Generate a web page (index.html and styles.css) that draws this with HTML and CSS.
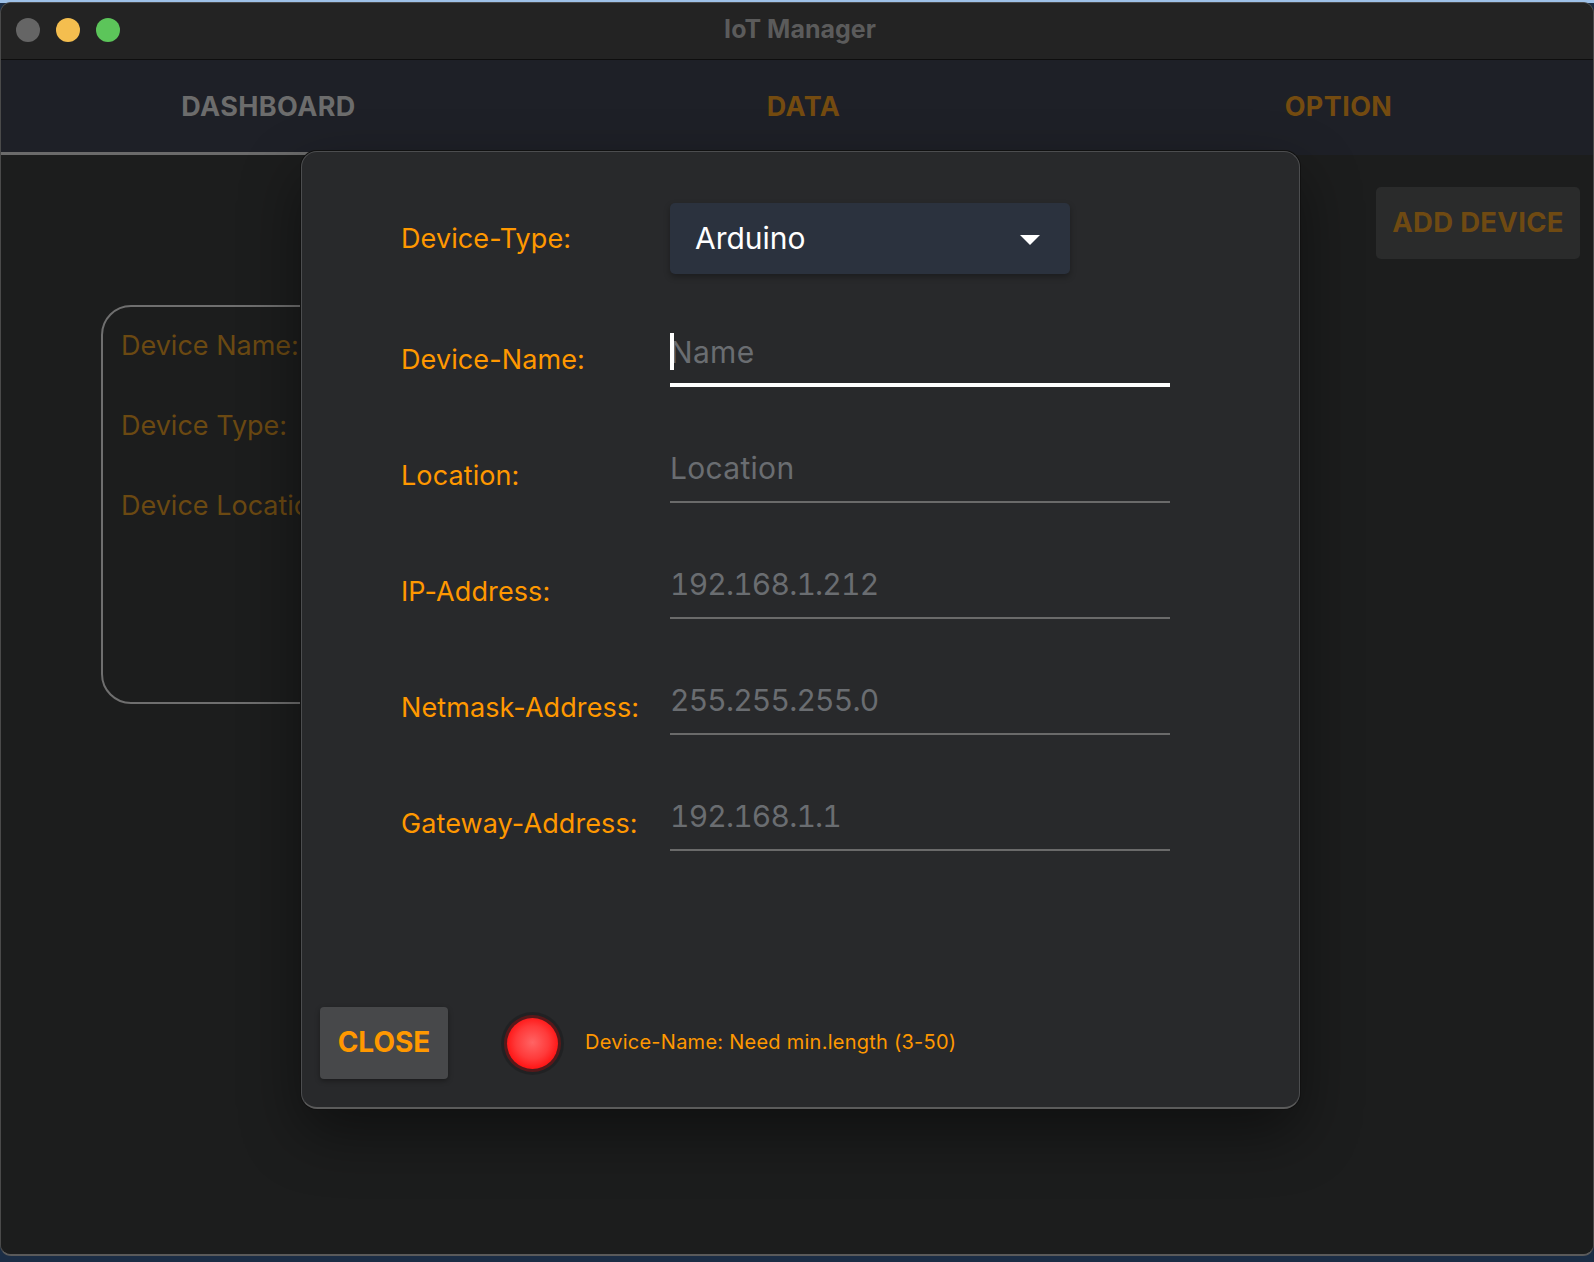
FILE: index.html
```html
<!DOCTYPE html>
<html lang="en">
<head>
<meta charset="utf-8">
<title>IoT Manager</title>
<link rel="stylesheet" href="styles.css">
</head>
<body>
<div class="desktop">
  <div class="window">
    <header class="titlebar">
      <div class="lights">
        <span class="light light-close"></span>
        <span class="light light-min"></span>
        <span class="light light-max"></span>
      </div>
      <div class="title">IoT Manager</div>
      <div class="spacer"></div>
    </header>
    <nav class="tabs">
      <div class="tab tab-active">DASHBOARD</div>
      <div class="tab">DATA</div>
      <div class="tab">OPTION</div>
    </nav>
    <main class="content">
      <section class="device-card">
        <p class="card-line">Device Name:</p>
        <p class="card-line">Device Type:</p>
        <p class="card-line">Device Location:</p>
      </section>
      <button class="add-btn">ADD DEVICE</button>
    </main>

    <div class="dialog">
      <div class="form">
        <div class="row row-select">
          <label class="label">Device-Type:</label>
          <div class="select">
            <span class="select-value">Arduino</span>
            <span class="select-arrow"></span>
          </div>
        </div>
        <div class="row row-field row-first">
          <label class="label">Device-Name:</label>
          <div class="field field-focus"><span class="caret"></span><span class="placeholder">Name</span></div>
        </div>
        <div class="row row-field">
          <label class="label">Location:</label>
          <div class="field"><span class="placeholder">Location</span></div>
        </div>
        <div class="row row-field">
          <label class="label">IP-Address:</label>
          <div class="field"><span class="placeholder num">192.168.1.212</span></div>
        </div>
        <div class="row row-field">
          <label class="label">Netmask-Address:</label>
          <div class="field"><span class="placeholder num">255.255.255.0</span></div>
        </div>
        <div class="row row-field">
          <label class="label">Gateway-Address:</label>
          <div class="field"><span class="placeholder num">192.168.1.1</span></div>
        </div>
      </div>
      <div class="footer">
        <button class="close-btn">CLOSE</button>
        <span class="led"></span>
        <span class="message">Device-Name: Need min.length (3-50)</span>
      </div>
    </div>
  </div>
</div>
</body>
</html>
```

FILE: styles.css
```css
* { box-sizing: border-box; }

html, body {
  margin: 0;
  padding: 0;
}

body {
  width: 1594px;
  height: 1262px;
  overflow: hidden;
  font-family: Inter, "Noto Sans", "Liberation Sans", sans-serif;
  background: linear-gradient(#9ec1e8 0, #9ec1e8 3px, #1b2d45 3px, #1b2d45 100%);
}

.desktop {
  padding-top: 2px;
}

.window {
  position: relative;
  width: 1594px;
  height: 1254px;
  border-radius: 11px;
  overflow: hidden;
  background: #1c1d1d;
  border: 1px solid #4a4a4a;
  border-bottom: 2px solid #5a5a5a;
  display: flex;
  flex-direction: column;
}

/* Title bar */
.titlebar {
  height: 57px;
  flex: none;
  background: #232323;
  border-bottom: 1px solid #0e0e0e;
  display: grid;
  grid-template-columns: 1fr auto 1fr;
  align-items: center;
}

.lights {
  display: flex;
  gap: 16px;
  padding-left: 15px;
  padding-bottom: 2px;
}

.light {
  width: 24px;
  height: 24px;
  border-radius: 50%;
  display: block;
}
.light-close { background: #656565; }
.light-min { background: #f4be4f; }
.light-max { background: #5cc55a; }

.title {
  font-size: 25px;
  font-weight: 700;
  color: #5b5b5b;
  padding-left: 6px;
  padding-bottom: 4px;
}

/* Tabs */
.tabs {
  height: 95px;
  flex: none;
  background: #1e2027;
  display: grid;
  grid-template-columns: repeat(3, 535px);
}

.tab {
  display: flex;
  align-items: center;
  justify-content: center;
  padding-bottom: 3px;
  font-size: 27px;
  font-weight: 700;
  color: #744b10;
  letter-spacing: 0.4px;
}

.tab-active {
  color: #6c6c6c;
  border-bottom: 3px solid #6b6b6b;
  padding-bottom: 0;
}

/* Content */
.content {
  flex: 1;
  background: #1c1d1d;
  display: flex;
  justify-content: space-between;
  align-items: flex-start;
  padding: 32px 13px 0 100px;
}

.device-card {
  margin-top: 118px;
  width: 560px;
  height: 399px;
  border: 2px solid #6f6f6f;
  border-radius: 30px;
  padding: 22px 18px 0 18px;
}

.card-line {
  margin: 0 0 47px 0;
  font-size: 27px;
  line-height: 33px;
  color: #6b4912;
  white-space: nowrap;
}

.add-btn {
  width: 204px;
  height: 72px;
  border: none;
  border-radius: 5px;
  background: #2a2b2b;
  color: #6f4a12;
  font-family: inherit;
  font-size: 27.5px;
  font-weight: 700;
  letter-spacing: 0.3px;
  padding: 0 0 2px 0;
}

/* Dialog overlay */
.dialog {
  position: absolute;
  left: 300px;
  top: 148px;
  width: 999px;
  height: 958px;
  background: #28292b;
  border: 1px solid #4c4d4f;
  border-bottom: 2px solid #5b5b5b;
  border-radius: 16px;
  box-shadow: 0 0 0 1px #111, 0 24px 60px rgba(0, 0, 0, 0.45);
  display: flex;
  flex-direction: column;
}

.form {
  padding: 51px 0 0 99px;
  display: flex;
  flex-direction: column;
}

.row {
  display: flex;
}

.label {
  width: 269px;
  flex: none;
  font-size: 27px;
  line-height: 34px;
  color: #ff9800;
  white-space: nowrap;
  letter-spacing: 0.1px;
}

.row-select {
  height: 71px;
  align-items: center;
}

.select {
  width: 400px;
  height: 71px;
  background: #2b323e;
  border-radius: 5px;
  box-shadow: 0 3px 6px rgba(0, 0, 0, 0.3);
  display: flex;
  align-items: center;
  justify-content: space-between;
  padding: 0 30px 0 25px;
}

.select-value {
  font-size: 30px;
  color: #ffffff;
  padding-bottom: 2px;
}

.select-arrow {
  width: 0;
  height: 0;
  border-left: 10px solid transparent;
  border-right: 10px solid transparent;
  border-top: 10px solid #ffffff;
  margin-top: 2px;
}

.row-field {
  height: 116px;
  align-items: flex-end;
}

.row-first {
  height: 113px;
}

.row-field .label {
  padding-bottom: 10px;
}

.field {
  position: relative;
  width: 500px;
  height: 58px;
  border-bottom: 2px solid #6a6a6a;
  display: flex;
  align-items: flex-end;
  padding-bottom: 15px;
}

.field-focus {
  height: 60px;
  border-bottom: 4px solid #ffffff;
  padding-bottom: 13px;
}

.placeholder {
  font-size: 30px;
  line-height: 36px;
  color: #6a6d71;
  letter-spacing: 0.3px;
}

.placeholder.num {
  font-variant-numeric: tabular-nums;
  letter-spacing: -0.8px;
}

.caret {
  position: absolute;
  left: 0;
  top: 6px;
  width: 4px;
  height: 37px;
  background: #ffffff;
}

/* Footer */
.footer {
  margin-top: auto;
  display: flex;
  align-items: center;
  padding: 0 0 28px 18px;
}

.close-btn {
  width: 128px;
  height: 72px;
  border: none;
  border-radius: 4px;
  background: #47484a;
  box-shadow: 0 2px 5px rgba(0, 0, 0, 0.35);
  color: #ff9800;
  font-family: inherit;
  font-size: 28px;
  font-weight: 700;
  padding: 0 0 2px 0;
}

.led {
  width: 51px;
  height: 51px;
  margin-left: 59px;
  border-radius: 50%;
  background: radial-gradient(circle at 50% 48%, #ff6464 0%, #ff3a3a 45%, #ff1010 75%, #e00000 100%);
  box-shadow: 0 0 0 3px rgba(255, 0, 0, 0.25), 0 0 0 6px rgba(0, 0, 0, 0.18);
}

.message {
  margin-left: 27px;
  font-size: 20px;
  letter-spacing: 0.25px;
  color: #ff9800;
  padding-bottom: 2px;
}
```
